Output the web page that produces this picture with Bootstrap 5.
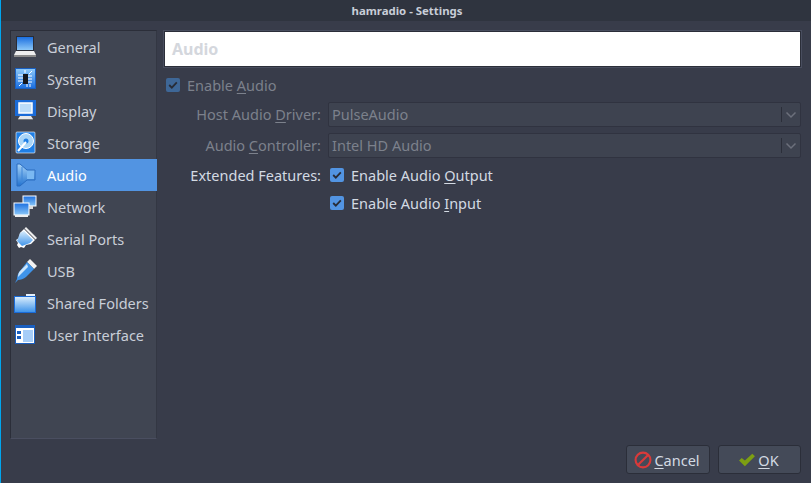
<!DOCTYPE html>
<html lang="en"><head><meta charset="utf-8"><title>hamradio - Settings</title>
<link href="https://cdn.jsdelivr.net/npm/bootstrap@5.3.0/dist/css/bootstrap.min.css" rel="stylesheet">
<style>
html,body{height:483px;overflow:hidden}
body{background:#383c4a;color:#d3dae3;font:14.5px/20px "Noto Sans",sans-serif;border-left:1px solid #00a5ee;padding-left:1px}
u{text-underline-offset:2px}
.win-title{height:21px;background:#2f343f;font-weight:700;font-size:11.4px;line-height:21px;text-align:center;color:#c8ced8;padding-left:2px;margin-left:-1px}
.win-body{height:462px;padding:9px 10px 9px 9px;margin-left:-1px}
.side-list{width:147px;height:409px;background:#404552;border:1px solid #2b2e39;border-right-color:#333743;border-bottom-color:#4a4e60;flex:none}
.side-item{height:32px;display:flex;align-items:center;padding-left:2px;color:#c9ced8;gap:10px;margin-right:-1px}
.side-item svg{flex:none}
.side-item.is-on{background:#5294e2;color:#fff}
.page-pane{margin-left:7px;width:637px;height:409px}
.head-box{height:36px;background:#fff;border:1px solid #2b2e39;outline:1px solid #484d5e;font-weight:700;font-size:16px;line-height:34px;padding-left:7px;color:#d4d7dd;margin-top:1px;margin-bottom:8px}
.dim{color:#7c818c}
.line-check{height:20px;gap:7px;padding-left:2px}
.tick{appearance:none;width:14px;height:14px;border-radius:2px;background:#5294e2 url("data:image/svg+xml,%3Csvg xmlns='http://www.w3.org/2000/svg' viewBox='0 0 14 14'%3E%3Cpath d='M3.2 7l2.6 2.6 5-5.2' fill='none' stroke='%23282c36' stroke-width='1.8'/%3E%3C/svg%3E") center/14px no-repeat;flex:none;margin:0;display:block}
.tick.off{background-color:#3e6797}
.form-grid{display:grid;grid-template-columns:157px 473px;column-gap:7px;margin-top:7px}
.form-grid>.lab{text-align:right;line-height:25px}
.combo{height:25px;background:#3e4350;border:1px solid #303340;border-radius:2px;padding-left:3px;line-height:23px;color:#7c818c;margin-bottom:6px;display:flex;justify-content:space-between}
.combo.last-combo{margin-bottom:3px}
.combo-end{display:flex;align-items:center}
.combo-sep{width:1px;height:15px;background:#2b2e39}
.combo-arrow{width:18px;display:flex;justify-content:center}
.row-ext{height:28px;display:flex;align-items:center;gap:7px;padding-left:2px}
.lab.lab-on{color:#d3dae3;line-height:28px}
.foot{height:29px;gap:8px;margin-top:-1px}
.foot-btn{height:29px;background:#444a58;border:1px solid #2b2e39;border-radius:3px;color:#d3dae3;font:14.5px/20px "Noto Sans",sans-serif;display:flex;align-items:center;justify-content:center;gap:2px;padding:0 2px 0 0}
.w-cancel{width:84px}.w-ok{width:83px}
</style></head><body>
<div class="win-title">hamradio - Settings</div>
<div class="win-body d-flex flex-column">
<svg width="0" height="0" class="position-absolute"><defs>
<linearGradient id="g1" x1="0" y1="0" x2="0" y2="1"><stop offset="0" stop-color="#1b6fe0"/><stop offset="1" stop-color="#8cc8f8"/></linearGradient>
<linearGradient id="g2" x1="0" y1="0" x2="0" y2="1"><stop offset="0" stop-color="#a8d4f8"/><stop offset="1" stop-color="#2172d0"/></linearGradient>
<linearGradient id="g3" x1="0" y1="0" x2="0" y2="1"><stop offset="0" stop-color="#d8ecfc"/><stop offset="1" stop-color="#3f94ea"/></linearGradient>
</defs></svg>
<div class="d-flex">
<div class="side-list">
<div class="side-item"><svg width="24" height="24" viewBox="0 0 24 24"><path d="M3 1h18v15H3z" fill="#2a2d36"/><path d="M4 2h16v13H4z" fill="url(#g1)"/><path d="M3 16h18l2 4H1z" fill="#eee"/><path d="M1 20h22v2H1z" fill="#8a8a8a"/></svg><span>General</span></div>
<div class="side-item"><svg width="24" height="24" viewBox="0 0 24 24"><rect x="2" y="1" width="21" height="21" fill="#1a5fc0"/><rect x="3" y="2" width="19" height="19" fill="url(#g1)" transform="rotate(180 12.500 11.500)"/><path d="M5 8h5M5 11h5M5 14h5M15 9h4M15 12h4M15 15h4M6 19l3-3M19 4l-3 3M14 17v3M17 17v3M12 3v3" stroke="#fff" stroke-width="1"/><rect x="10" y="7" width="5" height="10" fill="#15171c"/></svg><span>System</span></div>
<div class="side-item"><svg width="24" height="24" viewBox="0 0 24 24"><rect x="2" y="1" width="21" height="16" fill="#1a6bd8"/><rect x="6" y="4" width="13" height="10" fill="#bcdcf8" stroke="#fff" stroke-width="1.500"/><path d="M7 17h11l2 3H5z" fill="#e8e8e8"/><path d="M5 20h15v1H5z" fill="#777"/></svg><span>Display</span></div>
<div class="side-item"><svg width="24" height="24" viewBox="0 0 24 24"><rect x="3" y="1" width="19" height="21" rx="1" fill="#1f7fe6" stroke="#fff" stroke-width=".6"/><circle cx="13" cy="10" r="7.500" fill="#a9d5f7" stroke="#fff"/><circle cx="13" cy="10" r="2.500" fill="#1f7fe6"/><path d="M5 20l8-9" stroke="#fff" stroke-width="2"/></svg><span>Storage</span></div>
<div class="side-item is-on"><svg width="24" height="24" viewBox="0 0 24 24"><path d="M4 1h3l7 6h8v10h-8l-7 6H4z" fill="url(#g2)" stroke="#2a6cc0"/><path d="M14 8h7v8h-7z" fill="#7ab8f2"/><path d="M9 4v16" stroke="#3f86d8"/></svg><span>Audio</span></div>
<div class="side-item"><svg width="24" height="24" viewBox="0 0 24 24"><rect x="10" y="1" width="13" height="10" fill="url(#g1)" stroke="#fff"/><rect x="1" y="8" width="15" height="12" fill="url(#g1)" stroke="#fff"/><path d="M2 20h13v2H2z" fill="#eee"/><path d="M16 11h4v3h-4z" fill="#ddd"/></svg><span>Network</span></div>
<div class="side-item"><svg width="24" height="24" viewBox="0 0 24 24"><path d="M13 0l11 11-1.500 1.500L11.500 1.500z" fill="#eee"/><path d="M11 2l11 11-4 4-5 1-2 3-3-1-2 1-2-3 1-2-2-3 3-2 1-5z" fill="#fff"/><path d="M11 4l9 9-3 3-8 3-5-5 3-8z" fill="url(#g3)"/></svg><span>Serial Ports</span></div>
<div class="side-item"><svg width="24" height="24" viewBox="0 0 24 24"><path d="M17 0l7 7-3 3-7-7z" fill="#f2f2f2" stroke="#999" stroke-width=".5"/><path d="M14 3l7 7-8 8c-2 2-6 3-8 3l-3 3 2-4c0-3 1-6 3-8z" fill="#3f94ea"/><path d="M14 5l-7 7c-1 1-2 3-2 6l10-10z" fill="#cde6fb"/></svg><span>USB</span></div>
<div class="side-item"><svg width="24" height="24" viewBox="0 0 24 24"><path d="M1 5h22v17H1z" fill="#1a6bd8"/><path d="M13 3h9v2h-9z" fill="#e5f0fa"/><path d="M2 6h20v15H2z" fill="url(#g3)"/></svg><span>Shared Folders</span></div>
<div class="side-item"><svg width="24" height="24" viewBox="0 0 24 24"><rect x="2" y="2" width="20" height="19" fill="#1a5fc0"/><rect x="3" y="3" width="18" height="17" fill="#fff"/><rect x="3" y="3" width="18" height="2" fill="#1a5fc0"/><rect x="10" y="7" width="10" height="12" fill="#a6cdf8"/><rect x="4" y="8" width="4" height="3" fill="#1a5fc0"/><rect x="4" y="13" width="4" height="3" fill="#1a5fc0"/></svg><span>User Interface</span></div>
</div>
<div class="page-pane">
<div class="head-box">Audio</div>
<div class="d-flex align-items-center line-check dim"><input class="tick off" type="checkbox" checked disabled aria-label="Enable Audio"><span>Enable <u>A</u>udio</span></div>
<div class="form-grid">
<div class="lab dim">Host Audio <u>D</u>river:</div>
<div class="combo"><span>PulseAudio</span><span class="combo-end"><span class="combo-sep"></span><span class="combo-arrow"><svg width="12" height="8" viewBox="0 0 12 8"><path d="M1.500 1.500L6 6l4.500-4.500" fill="none" stroke="#6c707c" stroke-width="1.500"/></svg></span></span></div>
<div class="lab dim">Audio <u>C</u>ontroller:</div>
<div class="combo last-combo"><span>Intel HD Audio</span><span class="combo-end"><span class="combo-sep"></span><span class="combo-arrow"><svg width="12" height="8" viewBox="0 0 12 8"><path d="M1.500 1.500L6 6l4.500-4.500" fill="none" stroke="#6c707c" stroke-width="1.500"/></svg></span></span></div>
<div class="lab lab-on">Extended Features:</div>
<div class="row-ext"><input class="tick" type="checkbox" checked aria-label="Enable Audio Output"><span>Enable Audio <u>O</u>utput</span></div>
<div></div>
<div class="row-ext"><input class="tick" type="checkbox" checked aria-label="Enable Audio Input"><span>Enable Audio <u>I</u>nput</span></div>
</div>
</div>
</div>
<div class="d-flex justify-content-end foot mt-auto">
<button class="foot-btn w-cancel" type="button"><svg width="18" height="18" viewBox="0 0 17 17"><circle cx="8.500" cy="8.500" r="7" fill="none" stroke="#d93a3a" stroke-width="2"/><path d="M3.700 13.300l9.600-9.600" stroke="#d93a3a" stroke-width="2"/></svg><span><u>C</u>ancel</span></button>
<button class="foot-btn w-ok" type="button"><svg width="18" height="18" viewBox="0 0 17 17"><path d="M1 9l2.500-2.500L6.500 9 13.500 2.500 16 5l-9.500 9.500z" fill="#7d9f12"/></svg><span><u>O</u>K</span></button>
</div>
</div>
</body></html>
